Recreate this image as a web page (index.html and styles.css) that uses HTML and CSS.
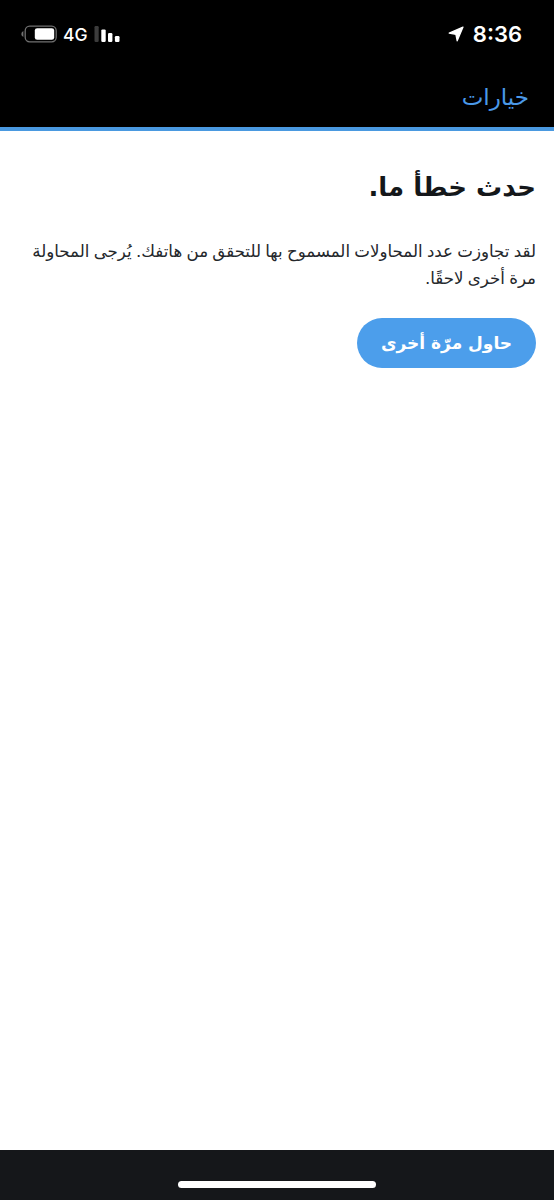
FILE: index.html
```html
<!DOCTYPE html>
<html lang="ar" dir="rtl">
<head>
  <meta charset="UTF-8" />
  <meta name="viewport" content="width=device-width, initial-scale=1.0"/>
  <title>حدث خطأ ما</title>
  <link rel="stylesheet" href="styles.css">
</head>
<body>

  <header class="topbar">
    <div class="status">
      <div class="clock">
        <span>8:36</span>
        <svg class="location" viewBox="0 0 16 16"><path d="M15 1.1 9.2 14.8 7.9 8.3 1.2 7.2z" fill="#fff" stroke="#fff" stroke-width="1.3" stroke-linejoin="round"/></svg>
      </div>
      <div class="signal">
        <svg class="bars" viewBox="0 0 26 16">
          <rect x="0.5" y="0" width="4.2" height="16" rx="1.2" fill="#3c3c3c"/>
          <rect x="7.3" y="3.4" width="4.4" height="12.6" rx="1.2" fill="#fff"/>
          <rect x="14" y="7" width="4.4" height="9" rx="1.2" fill="#fff"/>
          <rect x="20.9" y="10" width="4.6" height="6" rx="1.2" fill="#fff"/>
        </svg>
        <span>4G</span>
        <svg class="battery" viewBox="0 0 36 18">
          <rect x="4.2" y="1.2" width="31" height="15.6" rx="4.5" fill="none" stroke="#707070" stroke-width="1.3"/>
          <rect x="13.8" y="3.2" width="19.4" height="11.6" rx="2.4" fill="#fff"/>
          <path d="M2.4 6v6Q0.3 11 0.3 9t2.1-3z" fill="#707070"/>
        </svg>
      </div>
    </div>
    <a class="options" href="#">خيارات</a>
  </header>

  <main class="content">
    <h1>حدث خطأ ما.</h1>
    <p>لقد تجاوزت عدد المحاولات المسموح بها للتحقق من هاتفك. يُرجى المحاولة<br>مرة أخرى لاحقًا.</p>
    <button type="button" class="retry">حاول مرّة أخرى</button>
  </main>

  <footer class="bottombar">
    <div class="home-indicator"></div>
  </footer>

</body>
</html>
```
FILE: styles.css
```css
* { box-sizing: border-box; margin:0; padding:0; }
body { height:1200px; display:flex; flex-direction:column; background:#fff; font-family:"DejaVu Sans",sans-serif; overflow:hidden; }

.topbar { height:131px; background:#000; border-bottom:4px solid #4a99e0; }
.status { display:flex; justify-content:space-between; align-items:center; height:68px; padding:0 32px 0 21px; color:#fff; font-family:Inter,sans-serif; }
.clock { display:flex; align-items:center; gap:9px; font-size:22px; font-weight:600; }
.location { width:16px; height:16px; }
.signal { display:flex; align-items:center; gap:6px; font-size:17.5px; font-weight:500; }
.bars { width:26px; height:16px; }
.battery { width:36px; height:18px; }
.options { display:block; padding:16px 25px 0; color:#4a99e9; font-size:23px; text-decoration:none; }

.content { flex:1; padding:36px 18px; color:#14171a; }
h1 { font-size:26px; line-height:40px; font-weight:700; }
p { margin-top:31px; font-size:16.65px; line-height:27px; word-spacing:-1px; white-space:nowrap; color:#24272b; }
.retry { display:block; margin-top:26px; width:179px; height:50px; border:none; border-radius:25px; background:#4c9eeb; color:#fff; font:700 17px "DejaVu Sans",sans-serif; }

.bottombar { display:flex; justify-content:center; align-items:flex-end; height:50px; padding-bottom:12px; background:#15171a; }
.home-indicator { width:198px; height:7px; border-radius:4px; background:#fff; }
```
